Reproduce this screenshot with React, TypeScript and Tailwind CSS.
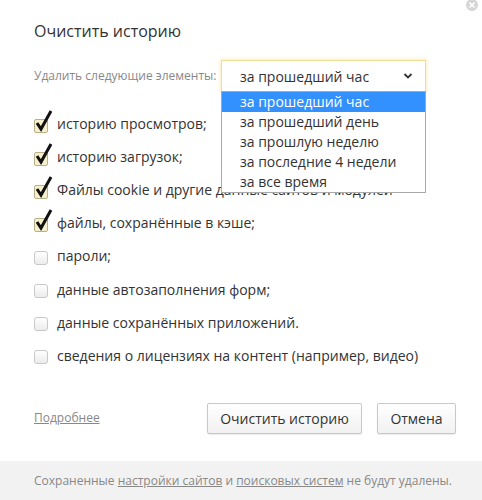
import React from "react";

const items = [
  { label: "историю просмотров;", checked: true },
  { label: "историю загрузок;", checked: true },
  { label: "Файлы cookie и другие данные сайтов и модулей", checked: true },
  { label: "файлы, сохранённые в кэше;", checked: true },
  { label: "пароли;", checked: false },
  { label: "данные автозаполнения форм;", checked: false },
  { label: "данные сохранённых приложений.", checked: false },
  { label: "сведения о лицензиях на контент (например, видео)", checked: false },
];

const options = [
  "за прошедший час",
  "за прошедший день",
  "за прошлую неделю",
  "за последние 4 недели",
  "за все время",
];

function Checkbox({ checked }: { checked: boolean }) {
  return (
    <span className="relative w-[14px] h-[14px] shrink-0 mt-[4px]">
      <span
        className={
          checked
            ? "absolute inset-0 rounded-[2px] border border-[#b9b08a] bg-[#f6efcc]"
            : "absolute inset-0 rounded-[3px] border border-[#c8c8c8] bg-gradient-to-b from-white to-[#ececec]"
        }
      />
      {checked && (
        <svg
          className="absolute left-0 top-[-10px] overflow-visible"
          width="20"
          height="24"
          viewBox="0 0 20 24"
        >
          <path
            d="M3 14 L7 20 L17 2"
            fill="none"
            stroke="#111"
            strokeWidth="3"
          />
        </svg>
      )}
    </span>
  );
}

export default function App() {
  return (
    <div className="relative w-[482px] h-[500px] bg-white overflow-hidden font-['Open_Sans','Segoe_UI',sans-serif] text-[#333]">
      {/* close button */}
      <div className="absolute right-[4px] top-[-1px] w-[12px] h-[12px] rounded-full bg-[#d6d6d6] flex items-center justify-center">
        <svg width="8" height="8" viewBox="0 0 8 8">
          <path d="M1.5 1.5 L6.5 6.5 M6.5 1.5 L1.5 6.5" stroke="white" strokeWidth="1.6" />
        </svg>
      </div>

      <div className="px-[34px] pt-[20px]">
        <h1 className="text-[16px] leading-[22px] text-[#333]">Очистить историю</h1>

        <div className="relative mt-[18px] flex items-center">
          <span className="text-[12px] text-[#888] whitespace-nowrap">Удалить следующие элементы:</span>
          <div className="ml-auto mr-[22px] w-[205px] h-[32px] flex items-center justify-between pl-[18px] pr-[12px] border border-[#f3dc95] shadow-[0_0_3px_1px_rgba(250,215,120,0.45)] bg-white text-[14px] whitespace-nowrap">
            <span>за прошедший час</span>
            <svg width="10" height="8" viewBox="0 0 10 8">
              <path d="M1.5 2 L5 5.5 L8.5 2" fill="none" stroke="#333" strokeWidth="1.8" />
            </svg>
          </div>

          {/* opened dropdown */}
          <div className="absolute right-[22px] top-[31px] z-10 w-[205px] border border-[#a9a9a9] bg-white text-[14px] leading-[20px] whitespace-nowrap">
            {options.map((o, i) => (
              <div
                key={o}
                className={
                  i === 0
                    ? "h-[20px] pl-[18px] bg-[#3390ff] text-white"
                    : "h-[20px] pl-[18px] text-[#333]"
                }
              >
                {o}
              </div>
            ))}
          </div>
        </div>

        <div className="mt-[15px] flex flex-col">
          {items.map((it) => (
            <div key={it.label} className="h-[33.1px] flex items-center gap-[9px] text-[14px] whitespace-nowrap">
              <Checkbox checked={it.checked} />
              <span>{it.label}</span>
            </div>
          ))}
        </div>

        <div className="mt-[31px] flex items-center">
          <a className="text-[12px] text-[#888] underline">Подробнее</a>
          <button className="ml-auto h-[31px] w-[155px] border border-[#c8c8c8] rounded-[2px] bg-gradient-to-b from-white to-[#f1f1f1] shadow-[0_1px_1px_rgba(0,0,0,0.08)] text-[14px] text-[#333]">
            Очистить историю
          </button>
          <button className="ml-[15px] mr-[-8px] h-[31px] w-[79px] border border-[#c8c8c8] rounded-[2px] bg-gradient-to-b from-white to-[#f1f1f1] shadow-[0_1px_1px_rgba(0,0,0,0.08)] text-[14px] text-[#333]">
            Отмена
          </button>
        </div>
      </div>

      <div className="absolute left-0 right-0 bottom-0 h-[39px] bg-[#f2f2f2] px-[34px] flex items-center text-[12px] text-[#888] whitespace-nowrap">
        <span>
          Сохраненные <span className="underline">настройки сайтов</span> и{" "}
          <span className="underline">поисковых систем</span> не будут удалены.
        </span>
      </div>
    </div>
  );
}
